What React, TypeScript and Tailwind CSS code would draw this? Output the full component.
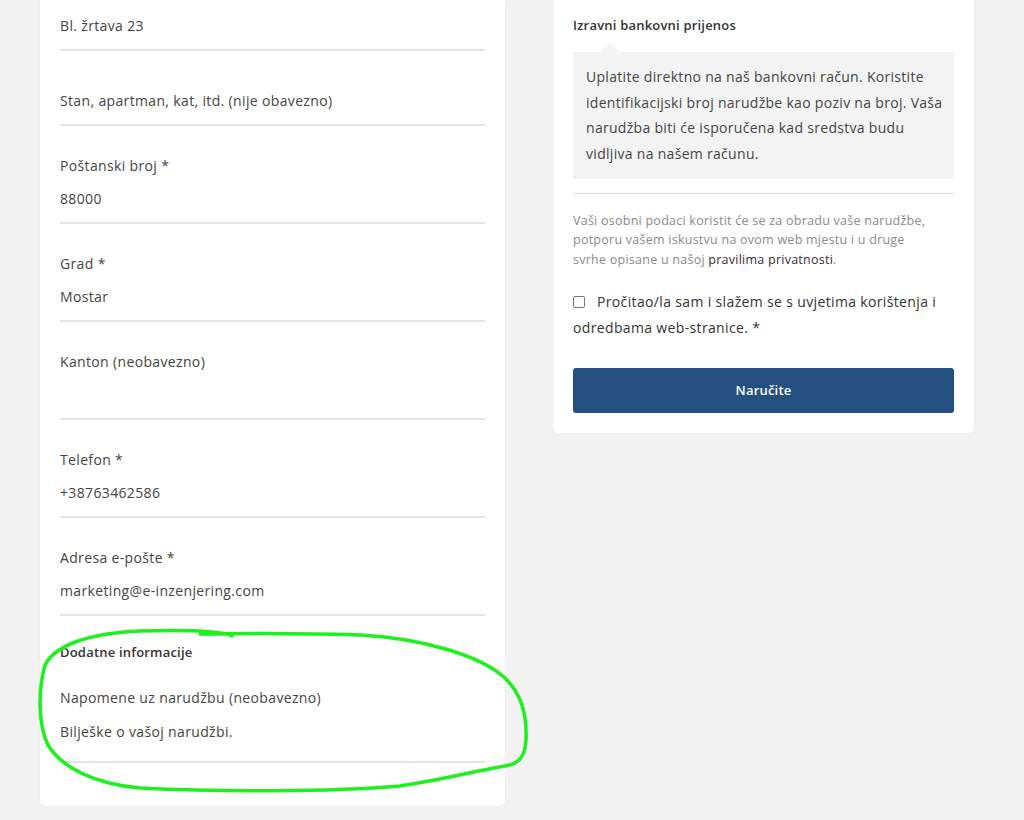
const font = { fontFamily: '"Open Sans", "Liberation Sans", sans-serif' }

type Field = { label?: string; value?: string; first?: boolean }

const fields: Field[] = [
    { value: 'Bl. žrtava 23', first: true },
    { value: 'Stan, apartman, kat, itd. (nije obavezno)' },
    { label: 'Poštanski broj *', value: '88000' },
    { label: 'Grad *', value: 'Mostar' },
    { label: 'Kanton (neobavezno)', value: '' },
    { label: 'Telefon *', value: '+38763462586' },
    { label: 'Adresa e-pošte *', value: 'marketing@e-inzenjering.com' },
]

function FormField({ label, value, first }: Field) {
    return (
        <div className={first ? 'pt-[3px]' : label ? 'pt-[30px]' : 'pt-[27px]'}>
            {label && <div className="h-[20px] leading-[20px] text-[14px] tracking-[0.35px] text-[#444]">{label}</div>}
            <div className="h-[48px] leading-[46px] border-b-2 border-[#e2e2e2] text-[14px] tracking-[0.35px] text-[#444]">
                {value}
            </div>
        </div>
    )
}

export default function App() {
    return (
        <div className="relative w-[1024px] h-[820px] overflow-hidden bg-[#f2f2f2]" style={font}>
            <div className="flex items-start gap-[48px] pl-[40px]">
                {/* lijeva kolona - adresa */}
                <div className="w-[465px] bg-white rounded-b-[5px] shadow-[0_0_2px_rgba(0,0,0,0.06)] px-[20px] pb-[43px]">
                    {fields.map((f, i) => (
                        <FormField key={i} {...f} />
                    ))}

                    <h3 className="mt-[27px] h-[18px] leading-[18px] text-[13px] tracking-[0.2px] font-semibold text-[#333]">Dodatne informacije</h3>
                    <div className="pt-[27px]">
                        <div className="h-[20px] leading-[20px] text-[14px] tracking-[0.35px] text-[#444]">Napomene uz narudžbu (neobavezno)</div>
                        <div className="h-[55px] pt-[14px] leading-[20px] border-b-2 border-[#e2e2e2] text-[14px] tracking-[0.35px] text-[#444]">
                            Bilješke o vašoj narudžbi.
                        </div>
                    </div>
                </div>

                {/* desna kolona - plaćanje */}
                <div className="w-[421px] bg-white rounded-b-[5px] shadow-[0_0_2px_rgba(0,0,0,0.06)] px-[20px] pb-[20px]">
                    <div className="pt-[16px] h-[42px] leading-[18px] text-[13px] tracking-[0.2px] font-semibold text-[#333]">Izravni bankovni prijenos</div>
                    <div className="relative mt-[10px] bg-[#f3f3f3] pl-[13px] pr-[4px] py-[12px] text-[14px] tracking-[0.3px] leading-[25.7px] text-[#444]">
                        <div className="absolute -top-[9px] left-[28px] w-0 h-0 border-l-[9px] border-r-[9px] border-b-[9px] border-l-transparent border-r-transparent border-b-[#f3f3f3]" />
                        Uplatite direktno na naš bankovni račun. Koristite identifikacijski broj narudžbe kao poziv na broj. Vaša narudžba biti će isporučena kad sredstva budu vidljiva na našem računu.
                    </div>
                    <div className="mt-[14px] border-t border-[#dcdcdc]" />
                    <p className="mt-[17px] text-[12.5px] tracking-[0.25px] leading-[19.5px] text-[#8a8a8a] whitespace-nowrap">
                        Vaši osobni podaci koristit će se za obradu vaše narudžbe,
                        <br />
                        potporu vašem iskustvu na ovom web mjestu i u druge
                        <br />
                        svrhe opisane u našoj <span className="text-[#3a2a3a]">pravilima privatnosti</span>.
                    </p>
                    <div className="mt-[20px] text-[14px] tracking-[0.35px] leading-[26px] text-[#333]">
                        <span className="inline-block align-[-1px] w-[12px] h-[12px] border border-[#767676] rounded-[2px] mr-[12px] bg-white" />
                        Pročitao/la sam i slažem se s uvjetima korištenja i odredbama web-stranice. *
                    </div>
                    <button className="mt-[27px] w-full h-[45px] rounded-[3px] bg-[#244f81] text-white text-[13px] tracking-[0.2px] font-semibold">
                        Naručite
                    </button>
                </div>
            </div>

            {/* ručno nacrtana oznaka */}
            <svg className="absolute inset-0 pointer-events-none" width="1024" height="820" viewBox="0 0 1024 820">
                <path
                    d="M 200 634 C 260 633, 330 634, 360 635 C 420 638, 480 655, 505 678 C 522 695, 527 715, 526 740 C 525 758, 518 764, 505 766 C 470 772, 440 780, 400 786 C 330 792, 220 792, 140 788 C 95 784, 62 768, 48 745 C 38 725, 38 690, 45 665 C 55 645, 90 633, 140 631 C 180 630, 220 630, 232 636"
                    fill="none"
                    stroke="#1ef01e"
                    strokeWidth="3.5"
                    strokeLinecap="round"
                    strokeLinejoin="round"
                />
            </svg>
        </div>
    )
}
